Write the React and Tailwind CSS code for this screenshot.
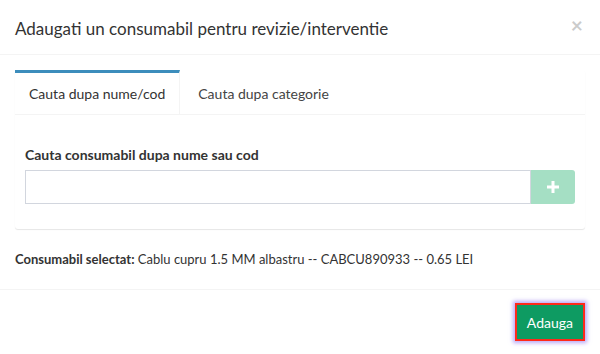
import React from "react";

const App = () => {
  return (
    <div
      className="w-[600px] h-[354px] bg-white text-[#333] text-[14px]"
      style={{ fontFamily: "Lato, 'Open Sans', sans-serif" }}
    >
      <header className="h-[55px] px-[15px] flex items-center justify-between border-b border-[#f4f4f4]">
        <h4 className="text-[17px] leading-[25px] text-[#333] mt-[2px]">
          Adaugati un consumabil pentru revizie/interventie
        </h4>
        <button className="text-[21px] font-bold leading-none text-black opacity-20 -mt-[6px] mr-[2px]">
          ×
        </button>
      </header>

      <div className="px-[15px] pt-[15px] pb-[20px]">
        <div className="bg-white rounded-[3px] shadow-[0_1px_1px_rgba(0,0,0,0.1)] mb-[20px]">
          <ul className="flex border-b border-[#f4f4f4]">
            <li className="border-t-[3px] border-[#3c8dbc] bg-white -mb-px border-r border-r-[#f4f4f4] px-[14px] h-[44px] flex items-center">
              Cauta dupa nume/cod
            </li>
            <li className="px-[18px] h-[44px] flex items-center pt-[3px] text-[#444]">
              Cauta dupa categorie
            </li>
          </ul>
          <div className="px-[10px] pt-[30px] pb-[25px]">
            <label className="block font-bold leading-[20px] mb-[5px]">
              Cauta consumabil dupa nume sau cod
            </label>
            <div className="flex">
              <input
                type="text"
                className="flex-1 h-[34px] border border-[#d2d6de] outline-none px-3"
              />
              <button className="w-[44px] h-[34px] bg-[#a5dfc4] rounded-r-[3px] flex items-center justify-center">
                <svg width="12" height="12" viewBox="0 0 12 12" fill="#fff">
                  <rect x="4.5" y="0" width="3" height="12" />
                  <rect x="0" y="4.5" width="12" height="3" />
                </svg>
              </button>
            </div>
          </div>
        </div>
        <p className="leading-[20px] text-[13px]">
          <b className="text-[#333]">Consumabil selectat:</b> Cablu cupru 1.5 MM albastru -- CABCU890933 -- 0.65 LEI
        </p>
      </div>

      <footer className="border-t border-[#f4f4f4] px-[15px] pt-[13px] flex justify-end">
        <button className="h-[38px] px-[10px] bg-[#0e9b62] text-white text-[14px] border-[2px] border-[#ff2a1a] shadow-[0_0_4px_2px_rgba(140,110,240,0.6)]">
          Adauga
        </button>
      </footer>
    </div>
  );
};

export default App;
